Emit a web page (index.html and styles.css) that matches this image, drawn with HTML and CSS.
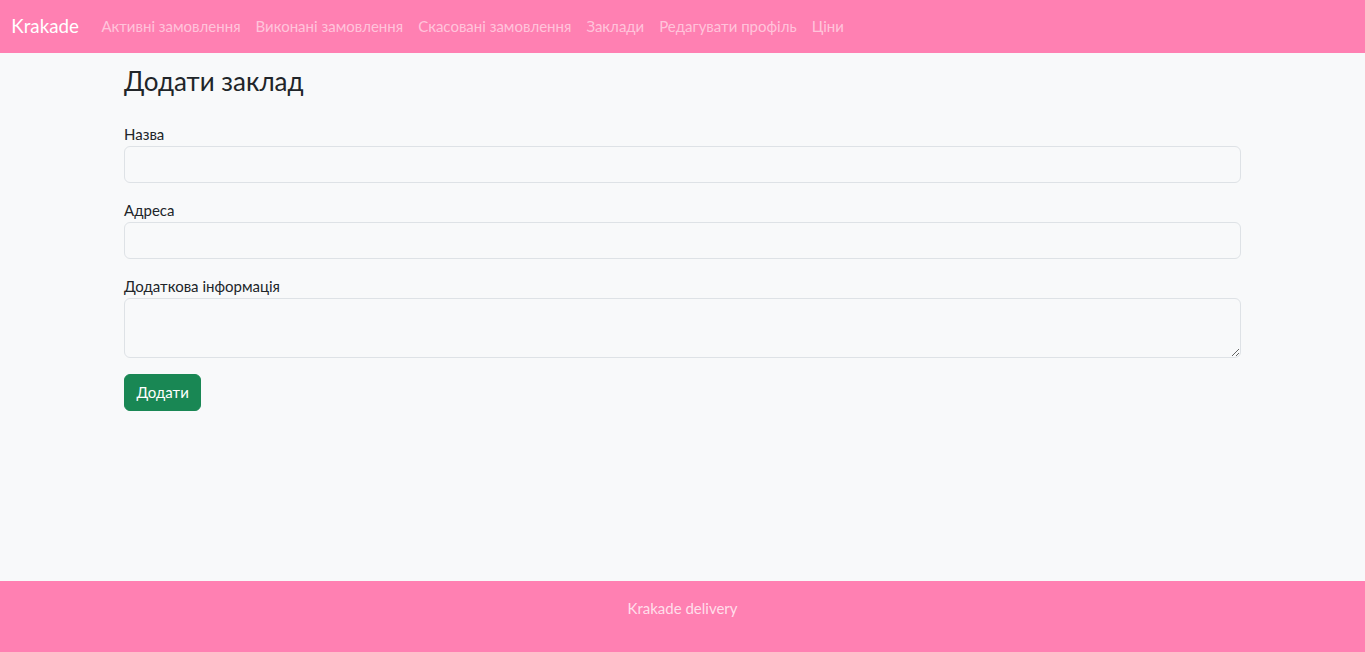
FILE: index.html
```html
<!DOCTYPE html>
<html lang="uk">
<head>
<meta charset="utf-8">
<title>Krakade</title>
<link rel="stylesheet" href="styles.css">
</head>
<body>
<header class="navbar">
  <a class="brand" href="#">Krakade</a>
  <nav class="nav">
    <a class="nav-link" href="#">Активні замовлення</a>
    <a class="nav-link" href="#">Виконані замовлення</a>
    <a class="nav-link" href="#">Скасовані замовлення</a>
    <a class="nav-link" href="#">Заклади</a>
    <a class="nav-link" href="#">Редагувати профіль</a>
    <a class="nav-link" href="#">Ціни</a>
  </nav>
</header>
<main class="main">
  <div class="container">
    <h3 class="title">Додати заклад</h3>
    <form class="form">
      <div class="field">
        <label class="label" for="name">Назва</label>
        <input class="control" id="name" type="text">
      </div>
      <div class="field">
        <label class="label" for="addr">Адреса</label>
        <input class="control" id="addr" type="text">
      </div>
      <div class="field">
        <label class="label" for="info">Додаткова інформація</label>
        <textarea class="control area" id="info" rows="2"></textarea>
      </div>
      <button class="btn" type="button">Додати</button>
    </form>
  </div>
</main>
<footer class="footer">
  <p class="footer-text">Krakade delivery</p>
</footer>
</body>
</html>
```
FILE: styles.css
```css
html { font-size: 15px; }
* { box-sizing: border-box; }
body {
  margin: 0;
  font-family: "Lato", "Noto Sans", sans-serif;
  font-size: 15px;
  line-height: 1.5;
  color: #212529;
  background: #f8f9fa;
  min-height: 100vh;
  display: flex;
  flex-direction: column;
}
.navbar {
  background: #ff80b2;
  display: flex;
  align-items: center;
  padding: 7.5px 11.25px;
}
.brand {
  color: #fff;
  text-decoration: none;
  font-size: 18.75px;
  line-height: 28px;
  padding: 4.7px 0;
  margin-right: 15px;
}
.nav { display: flex; }
.nav-link {
  color: rgba(255,255,255,0.55);
  text-decoration: none;
  padding: 7.5px 7.5px;
  line-height: 22.5px;
}
.main { flex: 1; }
.container {
  max-width: 1141px;
  margin: 0 auto;
  padding: 13px 12px 0;
}
.title {
  font-size: 26px;
  font-weight: 400;
  line-height: 1.2;
  margin: 0 0 26.5px;
}
.field { margin-bottom: 16px; }
.label { display: block; line-height: 22.5px; }
.control {
  display: block;
  width: 100%;
  height: 37.5px;
  padding: 5.6px 11.25px;
  font: inherit;
  color: #212529;
  background: #f8f9fa;
  border: 1px solid #dee2e6;
  border-radius: 6px;
}
.area { height: 60px; resize: vertical; }
.btn {
  font: inherit;
  color: #fff;
  background: #198754;
  border: 1px solid #198754;
  border-radius: 6px;
  padding: 5.6px 11.5px;
  height: 37.5px;
}
.footer {
  background: #ff80b2;
  text-align: center;
  padding: 16px 0 17.5px;
}
.footer-text {
  margin: 0 0 15px;
  line-height: 22.5px;
  color: rgba(255,255,255,0.75);
  font-size: 15px;
}
```
